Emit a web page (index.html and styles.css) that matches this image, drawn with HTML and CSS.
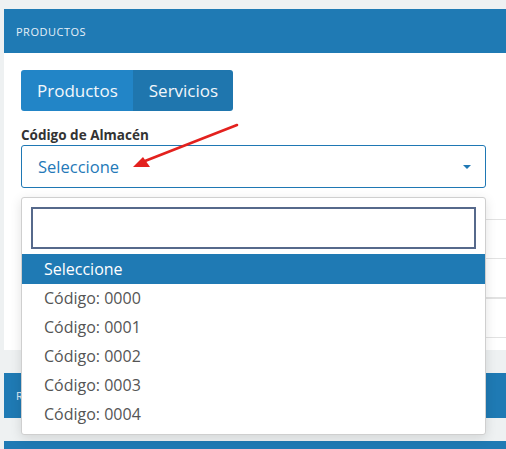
FILE: index.html
```html
<!DOCTYPE html>
<html lang="es">
<head>
<meta charset="utf-8">
<title>Productos</title>
<link rel="stylesheet" href="styles.css">
</head>
<body>
<div class="page">
  <section class="card">
    <div class="card-header">PRODUCTOS</div>
    <div class="card-body">
      <div class="btn-group">
        <button class="btn btn-active">Productos</button>
        <button class="btn">Servicios</button>
      </div>
      <label class="field-label">Código de Almacén</label>
      <div class="select">
        <span class="select-value">Seleccione</span>
        <span class="caret"></span>
      </div>
      <div class="table">
        <div class="row"></div>
        <div class="row row-thick"></div>
        <div class="row"></div>
      </div>

      <div class="dropdown">
        <div class="search"><input class="search-input" type="text"></div>
        <ul class="options">
          <li class="option option-selected">Seleccione</li>
          <li class="option">Código: 0000</li>
          <li class="option">Código: 0001</li>
          <li class="option">Código: 0002</li>
          <li class="option">Código: 0003</li>
          <li class="option">Código: 0004</li>
        </ul>
      </div>

      <svg class="arrow" width="120" height="60" viewBox="0 0 120 60">
        <line x1="117" y1="6" x2="25" y2="42" stroke="#e3211e" stroke-width="2.6" stroke-linecap="round"/>
        <polygon points="13,48 23,38 30,48" fill="#e3211e"/>
      </svg>
    </div>
  </section>
  <section class="card card-collapsed">
    <div class="card-header">R</div>
  </section>
  <section class="card card-collapsed">
    <div class="card-header"></div>
  </section>
</div>
</body>
</html>
```

FILE: styles.css
```css
html, body {
  margin: 0;
  padding: 0;
  background: #eef1f2;
  overflow: hidden;
  font-family: "Open Sans", "Liberation Sans", sans-serif;
}

.page {
  padding: 9px 0 0 4px;
  display: flex;
  flex-direction: column;
  gap: 23px;
}

.card {
  background: #fff;
  margin-right: -20px;
}

.card-header {
  background: #1f7ab4;
  color: #e6f0f8;
  height: 44px;
  display: flex;
  align-items: center;
  padding-left: 12px;
  font-size: 11px;
  letter-spacing: 0.5px;
  font-family: "Open Sans", "Liberation Sans", sans-serif;
}

.card-collapsed .card-header {
  height: 45px;
}

.card-body {
  position: relative;
  padding: 17px 40px 0 17px;
  height: 280px;
}

.btn-group {
  display: inline-flex;
  border-radius: 3px;
  overflow: hidden;
}

.btn {
  border: 0;
  height: 41px;
  padding: 0 15px 0 16px;
  font-family: "Open Sans", "Liberation Sans", sans-serif;
  font-size: 17px;
  color: #f2f7fb;
  background: #1f76ae;
}

.btn-active {
  background: #2285c7;
}

.field-label {
  display: block;
  margin-top: 14px;
  font-size: 13.5px;
  font-weight: 700;
  color: #333;
  line-height: 20px;
}

.select {
  height: 41px;
  border: 1px solid #1f78b4;
  border-radius: 3px;
  display: flex;
  align-items: center;
  justify-content: space-between;
  padding: 0 14px 0 16px;
}

.select-value {
  color: #2479b8;
  font-size: 16.5px;
}

.caret {
  width: 0;
  height: 0;
  border-left: 4px solid transparent;
  border-right: 4px solid transparent;
  border-top: 4px solid #1f78b4;
}

.table {
  margin-top: 31px;
  margin-right: -40px;
  border-top: 1px solid #e2e2e2;
}

.row {
  height: 38px;
  border-bottom: 1px solid #e2e2e2;
}

.row-thick {
  border-bottom-width: 2px;
}

.dropdown {
  position: absolute;
  left: 17px;
  top: 144px;
  width: 463px;
  height: 236px;
  background: #fff;
  border: 1px solid #cfcfcf;
  border-radius: 3px;
  box-shadow: 0 3px 12px rgba(0, 0, 0, 0.12);
}

.search {
  padding: 9px 9px 5px 9px;
}

.search-input {
  display: block;
  box-sizing: border-box;
  width: 100%;
  height: 42px;
  border: 2px solid #56698b;
  margin: 0;
  outline: none;
  border-radius: 0;
}

.options {
  list-style: none;
  margin: 0;
  padding: 0;
}

.option {
  height: 29px;
  line-height: 29px;
  padding-left: 22px;
  font-size: 16px;
  color: #555;
}

.option-selected {
  background: #1f7ab4;
  color: #fff;
  height: 30px;
  line-height: 30px;
}

.arrow {
  position: absolute;
  left: 116px;
  top: 66px;
}
```
